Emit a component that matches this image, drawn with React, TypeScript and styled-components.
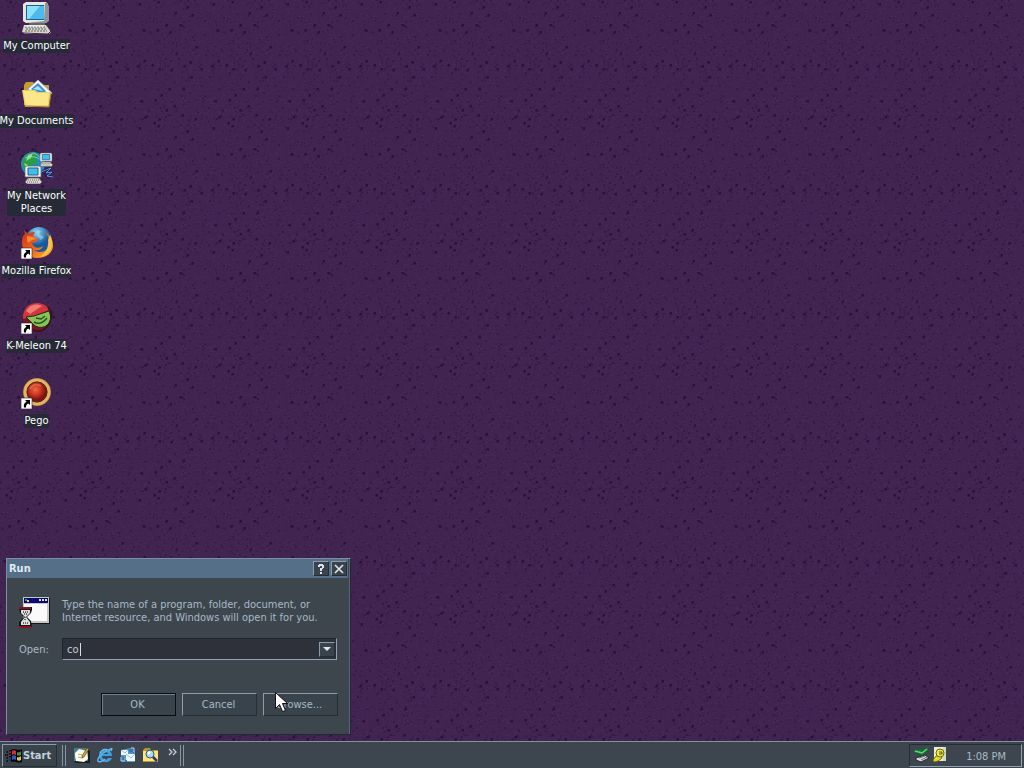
import React, { useState } from 'react';
import styled, { createGlobalStyle, css } from 'styled-components';

const GlobalStyle = createGlobalStyle`
  * { box-sizing: border-box; }
  html, body, #root { height: 100%; margin: 0; }
  body {
    overflow: hidden;
    background: #40254f;
    color: #a9b8c8;
    font: 11px/13px Tahoma, "DejaVu Sans Condensed", "Noto Sans", sans-serif;
  }
  button, input { font: inherit; color: inherit; }
`;

const Screen = styled.div`
  position: relative;
  isolation: isolate;
  display: flex;
  flex-direction: column;
  height: 100vh;
`;

const WallpaperSvg = styled.svg`
  position: absolute;
  inset: 0;
  z-index: -1;
  width: 100%;
  height: 100%;
`;

const Desktop = styled.main`
  position: relative;
  flex: 1;
  min-height: 0;
`;

const Shortcuts = styled.nav`
  display: grid;
  grid-template-columns: 100%;
  grid-auto-rows: 75px;
  width: 73px;
`;

const Shortcut = styled.a`
  display: flex;
  flex-direction: column;
  align-items: center;
  gap: 5px;
  padding-top: 2px;
  color: #fff;
  text-align: center;
  text-decoration: none;
`;

const ShortcutLabel = styled.span`
  padding: 0 0 1px;
  background: #262a37;
  white-space: pre;
`;

const Picture = styled.svg<{ $size: number }>`
  display: block;
  flex: none;
  width: ${p => p.$size}px;
  height: ${p => p.$size}px;
`;

const Dialog = styled.section`
  position: absolute;
  left: 6px;
  bottom: 6px;
  width: 345px;
  border: 1px solid #7c8fa3;
  border-right-color: #202831;
  border-bottom-color: #202831;
  background: #3d464d;
  box-shadow: inset -1px 0 #56677a;
`;

const TitleBar = styled.header`
  display: flex;
  align-items: center;
  gap: 2px;
  height: 19px;
  margin: 0 2px 1px 0;
  padding: 0 1px 0 2px;
  background: #566f89;
`;

const Title = styled.h1`
  flex: 1;
  margin: 0;
  color: #dfeaf5;
  font-size: 11px;
  line-height: 13px;
`;

const raised = css`
  border: 1px solid #8c9cac;
  border-right-color: #252d35;
  border-bottom-color: #252d35;
  background: #39434b;
`;

const SmallButton = styled.button`
  ${raised}
  display: grid;
  place-items: center;
  width: 16px;
  height: 15px;
  padding: 0;
  color: #dde6ee;
`;

const DialogBody = styled.form`
  display: grid;
  grid-template-columns: 43px 1fr;
  align-items: center;
  row-gap: 9px;
  padding: 18px 12px 18px 12px;
`;

const Prompt = styled.p`
  margin: 0;
  padding-bottom: 4px;
  white-space: nowrap;
`;

const Combo = styled.div`
  position: relative;
  display: flex;
  align-items: center;
  height: 22px;
  margin-right: 1px;
  padding-right: 1px;
  border: 1px solid #20262e;
  border-right-color: #93a3b3;
  border-bottom-color: #93a3b3;
  background: #2f313a;
`;

const Field = styled.input`
  flex: 1;
  min-width: 0;
  padding: 0 4px;
  border: 0;
  outline: 0;
  background: transparent;
  color: #c3ceda;
`;

const Caret = styled.span`
  position: absolute;
  left: 17px;
  top: 4px;
  width: 1px;
  height: 13px;
  background: #d5dfe9;
`;

const Actions = styled.div`
  grid-column: 1 / -1;
  display: flex;
  justify-content: flex-end;
  gap: 6px;
  padding-top: 24px;
`;

const ActionButton = styled.button<{ $primary?: boolean }>`
  ${raised}
  width: 75px;
  height: 23px;
  padding: 0 2px 1px 0;
  ${p => p.$primary && css`
    border-color: #070d14;
    box-shadow: inset 1px 1px #6f8090;
  `}
`;

const Pointer = styled.svg`
  position: absolute;
  left: 275px;
  bottom: 28px;
  width: 13px;
  height: 21px;
`;

const Taskbar = styled.footer`
  display: flex;
  align-items: center;
  height: 27px;
  padding: 1px 2px;
  border-top: 1px solid #8292a2;
  background: #3d464e;
`;

const StartButton = styled.button`
  ${raised}
  display: flex;
  align-items: center;
  gap: 1px;
  width: 55px;
  height: 23px;
  margin-right: 5px;
  padding: 0 2px;
  color: #c3d0dd;
  font-weight: bold;
`;

const Grip = styled.span`
  width: 4px;
  height: 21px;
  border: solid #8696a6;
  border-width: 0 1px;
`;

const QuickLaunch = styled.div`
  display: flex;
  gap: 7px;
  width: 114px;
  padding-left: 8px;
`;

const ToolButton = styled.button`
  display: grid;
  place-items: center;
  padding: 0;
  border: 0;
  background: none;
`;

const Tray = styled.div`
  display: flex;
  align-items: center;
  gap: 2px;
  height: 23px;
  margin-left: auto;
  padding: 0 15px 0 4px;
  border: 1px solid #252c34;
  border-right-color: #93a2b2;
  border-bottom-color: #93a2b2;
`;

const Clock = styled.time`
  padding: 2px 0 0 16px;
`;

const BIG_SPOTS = [
  [13, 1], [5, 13], [37, 25], [51, 24], [4, 39], [9, 55], [14, 63], [65, 13], [57, 19],
  [2, 73], [62, 73], [39, 78], [53, 78], [66, 80], [18, 95], [23, 117], [48, 113],
  [34, 114], [55, 117], [12, 110], [40, 109], [6, 114], [62, 34], [41, 41], [55, 43],
  [70, 30], [17, 43], [35, 52], [67, 118], [73, 101], [50, 47], [54, 50], [71, 61],
];

function makeSpecks() {
  let seed = 37;
  const next = () => {
    seed = (seed * 16807) % 2147483647;
    return seed / 2147483647;
  };
  return Array.from({ length: 1000 }, (_, i) => ({
    x: Math.floor(next() * 73),
    y: Math.floor(next() * 123),
    w: next() > 0.5 ? 2 : 1,
    h: i % 5 === 0 ? 2 : 1,
    dark: i % 5 < 2,
    alpha: 0.12 + next() * 0.36,
  }));
}

const SPECKS = makeSpecks();

function Wallpaper() {
  return (
    <WallpaperSvg aria-hidden="true">
      <defs>
        <pattern id="stone" x="30" y="76" width="74" height="124" patternUnits="userSpaceOnUse">
          <rect width="74" height="124" fill="#412550" />
          {SPECKS.map((s, i) => (
            <rect key={i} x={s.x} y={s.y} width={s.w} height={s.h} fill={s.dark ? '#230e37' : '#523062'} opacity={s.alpha} />
          ))}
          {BIG_SPOTS.map(([x, y]) => (
            <g key={`${x}-${y}`} fill="#220e36">
              <rect x={x - 1} y={y - 1} width="3" height="3" opacity=".4" />
              <rect x={x} y={y - 1} width="2" height="2" opacity=".6" />
            </g>
          ))}
        </pattern>
      </defs>
      <rect width="100%" height="100%" fill="url(#stone)" />
    </WallpaperSvg>
  );
}

const ShortcutArrow = () => (
  <g>
    <path d="M0 21h11v11H0z" fill="#fff" stroke="#242424" strokeWidth=".6" />
    <path d="M4 23h5v5L7.300 26.400C5.400 27.500 4.800 28.500 5 30.500H3c-.7-3 .3-4.500 2.600-5.800z" fill="#000" />
  </g>
);

const ComputerIcon = () => (
  <Picture $size={32} viewBox="0 0 32 32">
    <path d="M2 2 5 0h20l2 2v17l-2 2H5l-3-2z" fill="#e7e6dc" />
    <path d="M24 1h2l2 3v15l-3 2H5l18-2z" fill="#8f9296" />
    <path d="M5 3h18v15H5z" fill="#16619b" />
    <path d="M6 4h17v13H6z" fill="#4fb9ed" />
    <path d="M6 4h13L8 17H6z" fill="#8be1fc" />
    <path d="M8 21h16v3H8z" fill="#65646c" />
    <path d="M3 23h22l5 7-2 2H4l-3-2z" fill="#d8d5cb" />
    <path d="M4 25h20M5 27h21M4 29h22" stroke="#5d5c61" strokeDasharray="2 1" />
    <path d="m2 31 25 1 3-3" fill="none" stroke="#302c3b" />
    <path d="M4 24h19" stroke="#fff" />
  </Picture>
);

const DocumentsIcon = () => (
  <Picture $size={32} viewBox="0 0 32 32">
    <path d="M3 8 5 5h7l3 3h13v20H3z" fill="#c79c2a" />
    <path d="m7 12 10-9 14 13-8 9z" fill="#f4faff" stroke="#9aaec2" />
    <path d="m10 12 7-6 8 8-5 5z" fill="#438fcf" />
    <path d="m12 12 5-3 5 5z" fill="#a6e5ff" />
    <path d="M1 13h13l3 2h13l-2 15H4z" fill="#e8cf68" />
    <path d="M2 14h11l3 2h12l-1 12H5z" fill="#fbe68c" />
    <path d="m4 29 24 1 2-14" fill="none" stroke="#a37921" />
  </Picture>
);

const MiniPC = ({ x, y, scale = 1 }: { x: number; y: number; scale?: number }) => (
  <g transform={`translate(${x} ${y}) scale(${scale})`}>
    <path d="M0 1 2 0h12l2 1v10H0z" fill="#f0eee3" stroke="#5c6572" strokeWidth=".7" />
    <path d="M3 2h10v7H3z" fill="#45bde9" stroke="#17659c" />
    <path d="M3 12h11l3 4-2 2H2l-2-2z" fill="#dedbd0" stroke="#54515b" strokeWidth=".7" />
    <path d="M3 14h11M2 16h12" stroke="#625f67" strokeDasharray="1 1" />
  </g>
);

const NetworkIcon = () => (
  <Picture $size={32} viewBox="0 0 32 32">
    <circle cx="12" cy="12" r="12" fill="#218bc5" />
    <path d="M2 7C6 1 12-1 19 3l-4 4 2 4-6 2-1 7c-5-2-7-5-9-7z" fill="#2a9d4a" />
    <path d="m7 3 5-2-2 5-5 3zM3 11l4 2-2 3z" fill="#91dc78" />
    <path d="M12 1c7 2 9 7 9 12M4 6c7-3 11-1 18 3" fill="none" stroke="#a7e2f5" opacity=".6" />
    <MiniPC x={19} y={1} scale={.75} />
    <path d="m20 20 10-4-5 5 6-1-5 4 6 1" fill="none" stroke="#0b1f58" strokeWidth="2" />
    <path d="m20 20 10-4-5 5 6-1-5 4 6 1" fill="none" stroke="#8fb4f0" strokeWidth=".8" />
    <MiniPC x={4} y={14} />
  </Picture>
);

const FirefoxIcon = () => (
  <Picture $size={32} viewBox="0 0 32 32">
    <defs>
      <radialGradient id="ocean" cx=".4" cy=".2"><stop stopColor="#8cd6f5" /><stop offset="1" stopColor="#155a9e" /></radialGradient>
      <linearGradient id="fox" x1="0" y1="0" x2="1" y2="1"><stop stopColor="#c82e1d" /><stop offset=".55" stopColor="#ef681b" /><stop offset="1" stopColor="#ffc12e" /></linearGradient>
    </defs>
    <circle cx="18" cy="13" r="13" fill="url(#ocean)" />
    <path d="M3 3 7 7c3-2 6-2 7-2l-2 4 5 3-2 3-4 1c1 5 7 6 11 3-1 4-6 5-9 4 7 5 15 0 15-6 1-5-2-10-5-13 6 3 10 10 9 16-1 7-8 11-16 11C7 31 1 25 1 15 1 10 2 9 4 7z" fill="url(#fox)" />
    <path d="M29 8c5 9 1 20-10 22 6-4 9-10 8-17z" fill="#fbc24a" />
    <path d="m6 9 6 1 4 2-5 1-4 3c-1-3-1-5-1-7z" fill="#f48b3a" />
    <path d="m16 3 4 1-2 3 5 3-3 3-4-4z" fill="#a8def3" opacity=".55" />
    <ShortcutArrow />
  </Picture>
);

const KMeleonIcon = () => (
  <Picture $size={32} viewBox="0 0 32 32">
    <circle cx="16" cy="15" r="14" fill="#7d1420" />
    <path d="M2 17C1-2 23-3 28 8L13 14z" fill="#cf363d" />
    <path d="M5 9C9 2 16 1 21 4L9 12z" fill="#f07c78" />
    <path d="m5 15 8-1 15-5c3 7 2 12-3 15-4 2-8 2-12-1z" fill="#86c455" stroke="#2a2a1a" />
    <path d="M13 20c5 3 9 1 13-4M15 16l5 1 4-3" fill="none" stroke="#28502a" strokeWidth="1.500" />
    <path d="M27 5c6 7 3 18-5 23-4 2-8 1-10 0" fill="none" stroke="#33131c" strokeWidth="1.500" />
    <ShortcutArrow />
  </Picture>
);

const PegoIcon = () => (
  <Picture $size={32} viewBox="0 0 32 32">
    <defs><radialGradient id="ruby" cx=".42" cy=".38"><stop stopColor="#ee6a48" /><stop offset=".6" stopColor="#c5301e" /><stop offset="1" stopColor="#7c1412" /></radialGradient></defs>
    <circle cx="16" cy="15" r="14" fill="#a96624" />
    <circle cx="16" cy="15" r="12" fill="none" stroke="#dfb56a" strokeWidth="3" />
    <circle cx="16" cy="15" r="10" fill="url(#ruby)" stroke="#572617" />
    <path d="M9 12c2-4 6-6 11-3" fill="none" stroke="#f48a63" strokeWidth="2" opacity=".5" />
    <ShortcutArrow />
  </Picture>
);

const RunIcon = () => (
  <Picture $size={32} viewBox="0 0 32 32">
    <path d="M5 1h26v26H5z" fill="#14161b" />
    <path d="M4 0h26v26H4z" fill="#c5c6c6" />
    <path d="M5 1h24v5H5z" fill="#080879" />
    <path d="M5 7h23v17H5z" fill="#fafafa" />
    <path d="M6 2h2v2H6z" fill="#29a64a" /><path d="M8 3h2v2H8z" fill="#eedc39" />
    <path d="M20 2h2v2h-2zM23 2h2v2h-2zM26 2h2v2h-2z" fill="#e8e8e8" />
    <path d="M0 10h13v3l-1 3-4 4 4 4 1 6H0v-5l5-5-4-4z" fill="#15161a" />
    <path d="M2 13h9v3l-4 4 4 5v3H2v-3l4-5-4-4z" fill="#dedfdb" />
    <path d="M0 11h12M0 30h12" stroke="#8d1122" strokeWidth="2" />
    <path d="M4 15h5M5 17h3M6 20v4M4 26h5" stroke="#666" strokeDasharray="1 1" strokeWidth="2" />
  </Picture>
);

const WindowsIcon = () => (
  <Picture $size={17} viewBox="0 0 17 17">
    <path d="M6 3c4-3 6 2 11-1v13c-5 2-7-2-11 0z" fill="#050609" />
    <path d="M7 4c1-1 3-1 4 0v4C9 7 8 7 7 8z" fill="#ce3035" />
    <path d="M12 5c1 1 3 0 4-1v4c-1 1-3 1-4 0z" fill="#488b49" />
    <path d="M7 9c1-1 3-1 4 0v4c-2-1-3-1-4 0z" fill="#3559b6" />
    <path d="M12 10c1 1 3 0 4-1v4c-1 1-3 1-4 0z" fill="#e9c440" />
    <path d="M1 5h2M4 4h2M0 8h3M4 7h2M1 11h2M4 10h2M1 14h2M4 13h2" stroke="#101016" strokeWidth="2" />
    <path d="M1 5h1M4 5h2M1 8h1M4 8h2" stroke="#9d2934" />
    <path d="M1 11h1M4 11h2M1 14h1M4 13h2" stroke="#2c4898" />
  </Picture>
);

const DesktopToolIcon = () => (
  <Picture $size={16} viewBox="0 0 16 16">
    <path d="M0 2h14l2 2v12H2l-2-2z" fill="#171d22" />
    <path d="M0 1h14v13H0z" fill="#437b91" />
    <path d="m1 6 4-4 8 2 1 8-4 3-8-1-1-5z" fill="#fffce9" />
    <path d="m4 7 4 1M4 10l4 1" stroke="#b9aa87" />
    <path d="m8 9 5-8 2 1-5 8-2 1z" fill="#dba233" stroke="#413017" strokeWidth=".6" />
  </Picture>
);

const ExplorerIcon = () => (
  <Picture $size={16} viewBox="0 0 16 16">
    <path d="M15 9H5c0 3 4 5 6 2h4c-2 6-13 6-13-3C2 1 15 0 15 9zM5 7h6c-1-3-5-3-6 0z" fill="#3c9edf" />
    <path d="M3 6c1-4 7-5 10-2" fill="none" stroke="#8bd3fb" />
    <path d="M12 3c4-3 3-1 2 1M10 4C4 6 0 12 1 14c1 2 5 0 7-2" fill="none" stroke="#5cb9ed" strokeWidth="1.500" />
  </Picture>
);

const MailIcon = () => (
  <Picture $size={16} viewBox="0 0 16 16">
    <path d="m1 3 10-2 4 4v10H3l-2-6z" fill="#6198c7" />
    <path d="M1 3h7v5H1zM6 7h9v7H6z" fill="#eefaff" />
    <path d="m1 3 4 3 3-3M6 7l5 4 4-4" fill="none" stroke="#9dbfdb" />
    <path d="M8 2h4l2 2v3l-2-2-2 1zM2 9l2 1v3h3v2H3z" fill="#3276bd" />
    <path d="M11 1h3v4M1 10v4h4" fill="none" stroke="#b3e0f7" />
  </Picture>
);

const SearchIcon = () => (
  <Picture $size={16} viewBox="0 0 16 16">
    <path d="M0 3 2 1h5l1 2h7v12H0z" fill="#bd9233" />
    <path d="M0 4h15v10H0z" fill="#ffe37c" />
    <circle cx="7" cy="7" r="4" fill="#acdef2" stroke="#355a70" />
    <path d="m10 10 4 4" stroke="#1c3f78" strokeWidth="2.500" />
    <path d="m5 7 2-2" stroke="#fff" strokeWidth="2" />
  </Picture>
);

const EjectIcon = () => (
  <Picture $size={16} viewBox="0 0 16 16">
    <path d="m0 5 8 3 6-5V0l-5 3-3-1-6 2z" fill="#0a782d" />
    <path d="m1 4 7 2 5-4" fill="none" stroke="#5fd572" strokeWidth="1.500" />
    <path d="m2 11 9-3 4 3-8 4-5-2z" fill="#d4d9d8" stroke="#252b30" />
    <path d="m5 11 6-2M7 13l6-3" stroke="#62737b" />
  </Picture>
);

const PowerIcon = () => (
  <Picture $size={16} viewBox="0 0 16 16">
    <path d="M2 0h12v14H2z" fill="#eeedd0" />
    <path d="M11 0h3v14h-3z" fill="#d5d8c6" />
    <path d="m4 9 4-1 2 3-4 3-4 1-1-2z" fill="#e4db22" stroke="#77700c" />
    <circle cx="8" cy="6" r="4" fill="#f1e94a" stroke="#6e6711" />
    <path d="M7 5h3v2H7" fill="none" stroke="#554e10" />
  </Picture>
);

const SHORTCUTS = [
  { label: 'My Computer', icon: <ComputerIcon /> },
  { label: 'My Documents', icon: <DocumentsIcon /> },
  { label: 'My Network\nPlaces', icon: <NetworkIcon /> },
  { label: 'Mozilla Firefox', icon: <FirefoxIcon /> },
  { label: 'K-Meleon 74', icon: <KMeleonIcon /> },
  { label: 'Pego', icon: <PegoIcon /> },
];

const TOOLS = [
  { label: 'Show Desktop', icon: <DesktopToolIcon /> },
  { label: 'Internet Explorer', icon: <ExplorerIcon /> },
  { label: 'Outlook Express', icon: <MailIcon /> },
  { label: 'Search', icon: <SearchIcon /> },
];

function RunDialog() {
  const [command, setCommand] = useState('co');
  return (
    <Dialog role="dialog" aria-labelledby="run-title">
      <TitleBar>
        <Title id="run-title">Run</Title>
        <SmallButton type="button" aria-label="Help">
          <Picture $size={10} viewBox="0 0 10 10"><path d="M2 3V1h1V0h4v1h1v3H7v1H6v2H4V4h2V2H4v1zM4 8h2v2H4z" fill="currentColor" /></Picture>
        </SmallButton>
        <SmallButton type="button" aria-label="Close">
          <Picture $size={10} viewBox="0 0 10 10"><path d="m1 1 8 8M9 1 1 9" stroke="currentColor" strokeWidth="1.700" /></Picture>
        </SmallButton>
      </TitleBar>
      <DialogBody onSubmit={e => e.preventDefault()}>
        <RunIcon />
        <Prompt>Type the name of a program, folder, document, or<br />Internet resource, and Windows will open it for you.</Prompt>
        <label htmlFor="command">Open:</label>
        <Combo>
          <Field id="command" value={command} onChange={e => setCommand(e.target.value)} />
          {command === 'co' && <Caret />}
          <SmallButton type="button" aria-label="Recent commands">
            <Picture $size={10} viewBox="0 0 10 10"><path d="M1 3h8L5 7z" fill="currentColor" /></Picture>
          </SmallButton>
        </Combo>
        <Actions>
          <ActionButton $primary>OK</ActionButton>
          <ActionButton type="button">Cancel</ActionButton>
          <ActionButton type="button">Browse...</ActionButton>
        </Actions>
      </DialogBody>
    </Dialog>
  );
}

export default function App() {
  return (
    <Screen>
      <GlobalStyle />
      <Wallpaper />
      <Desktop>
        <Shortcuts aria-label="Desktop">
          {SHORTCUTS.map(s => (
            <Shortcut key={s.label} href="#">
              {s.icon}
              <ShortcutLabel>{s.label}</ShortcutLabel>
            </Shortcut>
          ))}
        </Shortcuts>
        <RunDialog />
        <Pointer viewBox="0 0 13 21" aria-hidden="true">
          <path d="M.5.5v16l4-4 3 7 3-1-3-7h5z" fill="#fff" stroke="#111" />
        </Pointer>
      </Desktop>
      <Taskbar>
        <StartButton><WindowsIcon />Start</StartButton>
        <Grip />
        <QuickLaunch>
          {TOOLS.map(t => <ToolButton key={t.label} aria-label={t.label}>{t.icon}</ToolButton>)}
          <ToolButton aria-label="More">
            <Picture $size={16} viewBox="0 0 16 16"><path d="m3 2 3 3-3 3M7 2l3 3-3 3" fill="none" stroke="#c3ced9" strokeWidth="1.300" /></Picture>
          </ToolButton>
        </QuickLaunch>
        <Grip />
        <Tray>
          <EjectIcon />
          <PowerIcon />
          <Clock>1:08 PM</Clock>
        </Tray>
      </Taskbar>
    </Screen>
  );
}
